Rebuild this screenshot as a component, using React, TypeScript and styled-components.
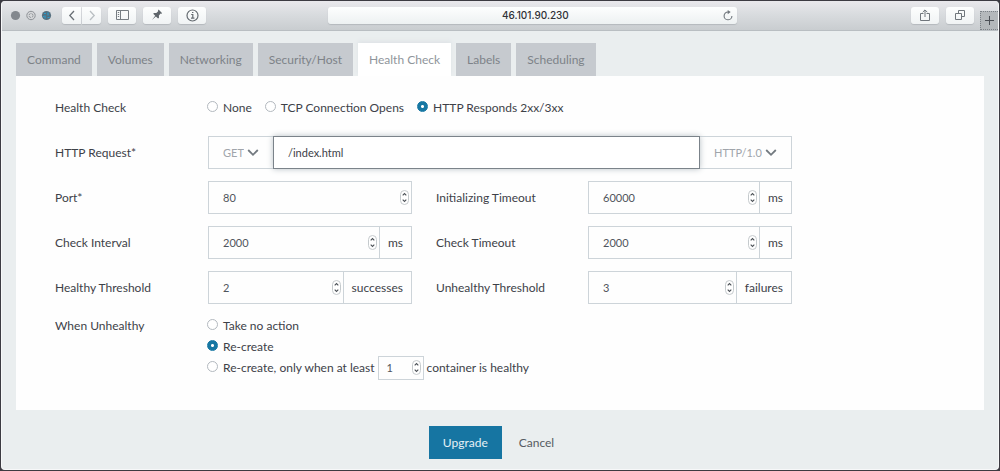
import React, { useId } from 'react';
import styled, { createGlobalStyle, css } from 'styled-components';

const GlobalStyle = createGlobalStyle`
  * { box-sizing: border-box; }
  body {
    margin: 0;
    background: #3c3b42;
    font-family: Lato, 'Liberation Sans', sans-serif;
    font-size: 12px;
    line-height: 16px;
    color: #3d4148;
  }
  button, input, select {
    font: inherit;
    color: inherit;
    margin: 0;
  }
`;

const line = '#cdd4d9';
const muted = '#8d9399';

const Window = styled.div`
  display: flex;
  flex-direction: column;
  min-height: calc(100vh - 2px);
  margin: 1px;
  border-radius: 4px;
  border: 1px solid #f7f8f9;
  border-top: 0;
  overflow: hidden;
  background: #eaeeef;
`;

const Toolbar = styled.header`
  display: flex;
  align-items: center;
  height: 30px;
  padding: 0 0 1px 8px;
  background: linear-gradient(#e9e8ec, #d9dcdf 45%, #c9cdd0);
  border-bottom: 1px solid #b9bec2;
`;

const Lights = styled.svg`
  flex: none;
  margin-right: 9px;
`;

const ToolButton = styled.button<{ $width?: number; $side?: 'left' | 'right' }>`
  display: flex;
  flex: none;
  align-items: center;
  justify-content: center;
  width: ${(p) => p.$width ?? 28}px;
  height: 17px;
  padding: 0;
  border: 0;
  border-radius: ${(p) => (p.$side === 'left' ? '3px 0 0 3px' : p.$side === 'right' ? '0 3px 3px 0' : '3px')};
  background: linear-gradient(#fdfefe, #f0f3f4);
  box-shadow: 0 1px 1px #b4b9bd;
  color: #6f757b;
`;

const ToolGroup = styled.div`
  display: flex;
  flex: none;
  gap: 1px;
`;

const Tools = styled.div`
  display: flex;
  flex: 267 1 0;
  gap: 7px;
`;

const EndTools = styled(Tools)`
  flex-grow: 238;
  justify-content: flex-end;
  padding-right: 6px;
`;

const Address = styled.div`
  display: flex;
  flex: 0 1 409px;
  align-items: center;
  height: 17px;
  padding: 0 4px 0 20px;
  border-radius: 3px;
  background: linear-gradient(#fdfefe, #edf1f2);
  box-shadow: 0 1px 1px #b4b9bd;
  color: #6f757b;
`;

const AddressInput = styled.input`
  flex: 1;
  min-width: 0;
  padding: 0;
  border: 0;
  outline: 0;
  background: transparent;
  text-align: center;
  font-family: Inter, 'Liberation Sans', sans-serif;
  font-size: 10px;
  font-weight: 500;
  color: #2f3237;
`;

const NewTab = styled.button`
  display: flex;
  flex: none;
  align-self: flex-end;
  align-items: center;
  justify-content: center;
  width: 18px;
  height: 19px;
  margin-bottom: -1px;
  padding: 0;
  border: 1px dotted #7c8187;
  border-right: 0;
  background: #b4b8bb;
  color: #4b4f55;
`;

const Main = styled.main`
  display: flex;
  flex: 1;
  flex-direction: column;
  padding: 12px 14px 0;
`;

const Tabs = styled.div`
  display: flex;
  gap: 5px;
`;

const Tab = styled.button<{ $active: boolean }>`
  height: 33px;
  padding: 0 11px;
  border: 0;
  background: #c6cacf;
  color: #7d8288;
  ${(p) =>
    p.$active &&
    css`
      background: #fff;
      color: #8f959b;
      box-shadow: 0 -2px 4px #dfe3e6;
    `}
`;

const Panel = styled.form`
  display: grid;
  grid-template-columns: 153fr 204fr 24fr 152fr 204fr 153fr;
  row-gap: 12px;
  padding: 15px 39px 33px;
  background: #fefefe;
`;

const Label = styled.label<{ $column?: number }>`
  grid-column: ${(p) => p.$column ?? 1};
  align-self: start;
  line-height: 33px;
`;

const GroupLabel = styled.span<{ $height: number }>`
  grid-column: 1;
  line-height: ${(p) => p.$height}px;
`;

const RadioRow = styled.div`
  grid-column: 2 / 7;
  display: flex;
  gap: 14px;
  height: 33px;
`;

const RadioStack = styled.div`
  grid-column: 2 / 7;
  display: flex;
  flex-direction: column;
  gap: 2px;
`;

const RadioLabel = styled.label`
  display: flex;
  align-items: center;
  gap: 5px;
  min-height: 19px;
  white-space: nowrap;
`;

const Radio = styled.input`
  appearance: none;
  flex: none;
  width: 11px;
  height: 11px;
  margin: 0 0 2px -1px;
  border: 1px solid #b3b9bf;
  border-radius: 50%;
  background: #fff;
  &:checked {
    border-color: #1677a3;
    background: radial-gradient(circle, #fff 0 1px, #1677a3 2px);
  }
`;

const Inline = styled.div`
  display: flex;
  align-items: center;
  gap: 3px;
  height: 19px;
`;

const Group = styled.div<{ $column: string }>`
  grid-column: ${(p) => p.$column};
  display: flex;
  min-width: 0;
  height: 33px;
`;

const Box = styled.div<{ $compact?: boolean }>`
  display: flex;
  flex: ${(p) => (p.$compact ? '0 0 46px' : '1')};
  align-items: center;
  min-width: 0;
  height: ${(p) => (p.$compact ? 24 : 33)}px;
  padding: 0 2px 0 ${(p) => (p.$compact ? 8 : 14)}px;
  border: 1px solid ${line};
`;

const NumberInput = styled.input`
  appearance: textfield;
  flex: 1;
  min-width: 0;
  width: 100%;
  padding: 0;
  border: 0;
  outline: 0;
  background: transparent;
  font-size: 11px;
  color: #50555c;
  &::-webkit-inner-spin-button,
  &::-webkit-outer-spin-button { appearance: none; margin: 0; }
`;

const Unit = styled.span`
  flex: none;
  padding: 0 8px;
  border: 1px solid ${line};
  border-left: 0;
  line-height: 31px;
`;

const SelectBox = styled.div`
  display: flex;
  flex: none;
  align-items: center;
  gap: 3px;
  padding: 0 14px;
  border: 1px solid ${line};
  color: ${muted};
  &:first-child { border-right: 0; }
  &:last-child { border-left: 0; }
`;

const Select = styled.select`
  appearance: none;
  padding: 0;
  border: 0;
  outline: 0;
  background: transparent;
  font-size: 11px;
  color: #a0a5ab;
`;

const PathInput = styled.input`
  position: relative;
  flex: 1;
  min-width: 0;
  padding: 0 14px;
  border: 1px solid #7b838a;
  outline: 0;
  background: #fff;
  box-shadow: 0 0 6px #b9c1c6;
  font-size: 11px;
`;

const Footer = styled.footer`
  display: flex;
  justify-content: center;
  padding: 16px 0 10px;
`;

const Action = styled.button<{ $primary?: boolean }>`
  height: 33px;
  padding: 0 ${(p) => (p.$primary ? 14 : 17)}px;
  border: 0;
  background: ${(p) => (p.$primary ? '#1675a2' : 'transparent')};
  color: ${(p) => (p.$primary ? '#e6f1f6' : '#565b62')};
`;

const Spinner = () => (
  <svg width="9" height="15" viewBox="0 0 9 15" fill="none" aria-hidden="true">
    <rect x=".5" y=".5" width="8" height="14" rx="4" fill="#fff" stroke="#c5cacd" />
    <path d="M2.7 5.4 4.5 3.6 6.3 5.4M2.7 9.6 4.5 11.4 6.3 9.6" stroke="#4b5056" strokeWidth="1.1" />
  </svg>
);

const Chevron = () => (
  <svg width="12" height="8" viewBox="0 0 12 8" fill="none" aria-hidden="true">
    <path d="M1.2 1 6 5.8 10.8 1" stroke="#737a80" strokeWidth="1.8" />
  </svg>
);

interface NumberFieldProps {
  label: string;
  value: number;
  unit?: string;
  right?: boolean;
}

const NumberField = ({ label, value, unit, right }: NumberFieldProps) => {
  const id = useId();
  return (
    <>
      <Label htmlFor={id} $column={right ? 4 : 1}>{label}</Label>
      <Group $column={right ? '5' : '2'}>
        <Box>
          <NumberInput id={id} type="number" defaultValue={value} />
          <Spinner />
        </Box>
        {unit && <Unit>{unit}</Unit>}
      </Group>
    </>
  );
};

const tabs = ['Command', 'Volumes', 'Networking', 'Security/Host', 'Health Check', 'Labels', 'Scheduling'];

const BrowserBar = () => (
  <Toolbar>
    <Lights width="43" height="11" viewBox="0 0 43 11" aria-hidden="true">
      <circle cx="5.5" cy="5.5" r="4.6" fill="#83888e" />
      <circle cx="21" cy="5.5" r="4.2" fill="#d5d7d9" stroke="#8d9196" />
      <circle cx="21" cy="5.5" r="2" fill="none" stroke="#8d9196" strokeDasharray="2 1" />
      <circle cx="36.5" cy="5.5" r="4.6" fill="#56707f" />
      <path d="M34 3.5h2M38 2.5v3M35 5.5v3M37.5 7.5h2M33 6.5h1" stroke="#2b9ccc" strokeWidth="1.2" />
    </Lights>
    <Tools>
      <ToolGroup>
        <ToolButton $width={19} $side="left" aria-label="Back">
          <svg width="8" height="11" viewBox="0 0 8 11" fill="none"><path d="M6 1 1.8 5.5 6 10" stroke="#6a7076" strokeWidth="1.3" /></svg>
        </ToolButton>
        <ToolButton $width={19} $side="right" aria-label="Forward">
          <svg width="8" height="11" viewBox="0 0 8 11" fill="none"><path d="M2 1 6.2 5.5 2 10" stroke="#babfc3" strokeWidth="1.3" /></svg>
        </ToolButton>
      </ToolGroup>
      <ToolButton aria-label="Sidebar">
        <svg width="13" height="10" viewBox="0 0 13 10" fill="none" stroke="#767c82"><path d="M.5.5h12v9H.5zM4.5.5v9M1.8 2.5h1.4M1.8 4.5h1.4M1.8 6.5h1.4" /></svg>
      </ToolButton>
      <ToolButton aria-label="Pin">
        <svg width="12" height="12" viewBox="0 0 12 12"><path d="M7.6.6 11.2 4.2 10.2 4.8 9.6 4.6 7.9 6.5 8 8.8 7.1 9.6 4.9 7.5 1 11 4.2 6.8 2.2 4.8 3 3.9 5.3 4 7.2 2.3 7 1.4Z" fill="#5f656b" /></svg>
      </ToolButton>
      <ToolButton aria-label="Info">
        <svg width="13" height="13" viewBox="0 0 13 13" fill="none" stroke="#656b71"><circle cx="6.5" cy="6.5" r="5.5" strokeWidth="1.2" /><path d="M5.2 5.5h1.6v3.7M5 9.2h3.4M6 3.5h1.4" strokeWidth="1.2" /></svg>
      </ToolButton>
    </Tools>
    <Address>
      <AddressInput aria-label="Address" defaultValue="46.101.90.230" />
      <svg width="10" height="11" viewBox="0 0 10 11" fill="none" aria-hidden="true"><path d="M5 2a3.9 3.9 0 1 0 3.9 3.9" stroke="#70767c" strokeWidth="1.1" /><path d="M4.7 0 7.7 2.1 4.7 4.2Z" fill="#70767c" /></svg>
    </Address>
    <EndTools>
      <ToolButton aria-label="Share">
        <svg width="10" height="12" viewBox="0 0 10 12" fill="none" stroke="#70767c"><path d="M3.5 4.5h-3v7h9v-7h-3M5 8V1.2M2.7 3.2 5 .9 7.3 3.2" /></svg>
      </ToolButton>
      <ToolButton aria-label="Show tabs">
        <svg width="10" height="10" viewBox="0 0 10 10" fill="none" stroke="#70767c"><path d="M.5 3.5h6v6h-6zM3.5 3.5v-3h6v6h-3" /></svg>
      </ToolButton>
    </EndTools>
    <NewTab aria-label="New tab">
      <svg width="11" height="11" viewBox="0 0 11 11" stroke="currentColor"><path d="M5.5 1v9M1 5.5h9" /></svg>
    </NewTab>
  </Toolbar>
);

export default function App() {
  return (
    <>
      <GlobalStyle />
      <Window>
        <BrowserBar />
        <Main>
          <Tabs role="tablist">
            {tabs.map((name) => (
              <Tab key={name} type="button" role="tab" aria-selected={name === 'Health Check'} $active={name === 'Health Check'}>
                {name}
              </Tab>
            ))}
          </Tabs>
          <Panel>
            <GroupLabel id="check-kind" $height={33}>Health Check</GroupLabel>
            <RadioRow role="radiogroup" aria-labelledby="check-kind">
              <RadioLabel><Radio type="radio" name="check" />None</RadioLabel>
              <RadioLabel><Radio type="radio" name="check" />TCP Connection Opens</RadioLabel>
              <RadioLabel><Radio type="radio" name="check" defaultChecked />HTTP Responds 2xx/3xx</RadioLabel>
            </RadioRow>

            <Label htmlFor="path">HTTP Request*</Label>
            <Group $column="2 / 6">
              <SelectBox>
                <Select aria-label="Method"><option>GET</option></Select>
                <Chevron />
              </SelectBox>
              <PathInput id="path" type="text" defaultValue="/index.html" autoFocus />
              <SelectBox>
                <Select aria-label="HTTP version"><option>HTTP/1.0</option></Select>
                <Chevron />
              </SelectBox>
            </Group>

            <NumberField label="Port*" value={80} />
            <NumberField label="Initializing Timeout" value={60000} unit="ms" right />
            <NumberField label="Check Interval" value={2000} unit="ms" />
            <NumberField label="Check Timeout" value={2000} unit="ms" right />
            <NumberField label="Healthy Threshold" value={2} unit="successes" />
            <NumberField label="Unhealthy Threshold" value={3} unit="failures" right />

            <GroupLabel id="unhealthy" $height={19}>When Unhealthy</GroupLabel>
            <RadioStack role="radiogroup" aria-labelledby="unhealthy">
              <RadioLabel><Radio type="radio" name="action" />Take no action</RadioLabel>
              <RadioLabel><Radio type="radio" name="action" defaultChecked />Re-create</RadioLabel>
              <Inline>
                <RadioLabel><Radio type="radio" name="action" />Re-create, only when at least</RadioLabel>
                <Box $compact>
                  <NumberInput id="quorum" type="number" defaultValue={1} />
                  <Spinner />
                </Box>
                <label htmlFor="quorum">container is healthy</label>
              </Inline>
            </RadioStack>
          </Panel>
          <Footer>
            <Action type="button" $primary>Upgrade</Action>
            <Action type="button">Cancel</Action>
          </Footer>
        </Main>
      </Window>
    </>
  );
}
